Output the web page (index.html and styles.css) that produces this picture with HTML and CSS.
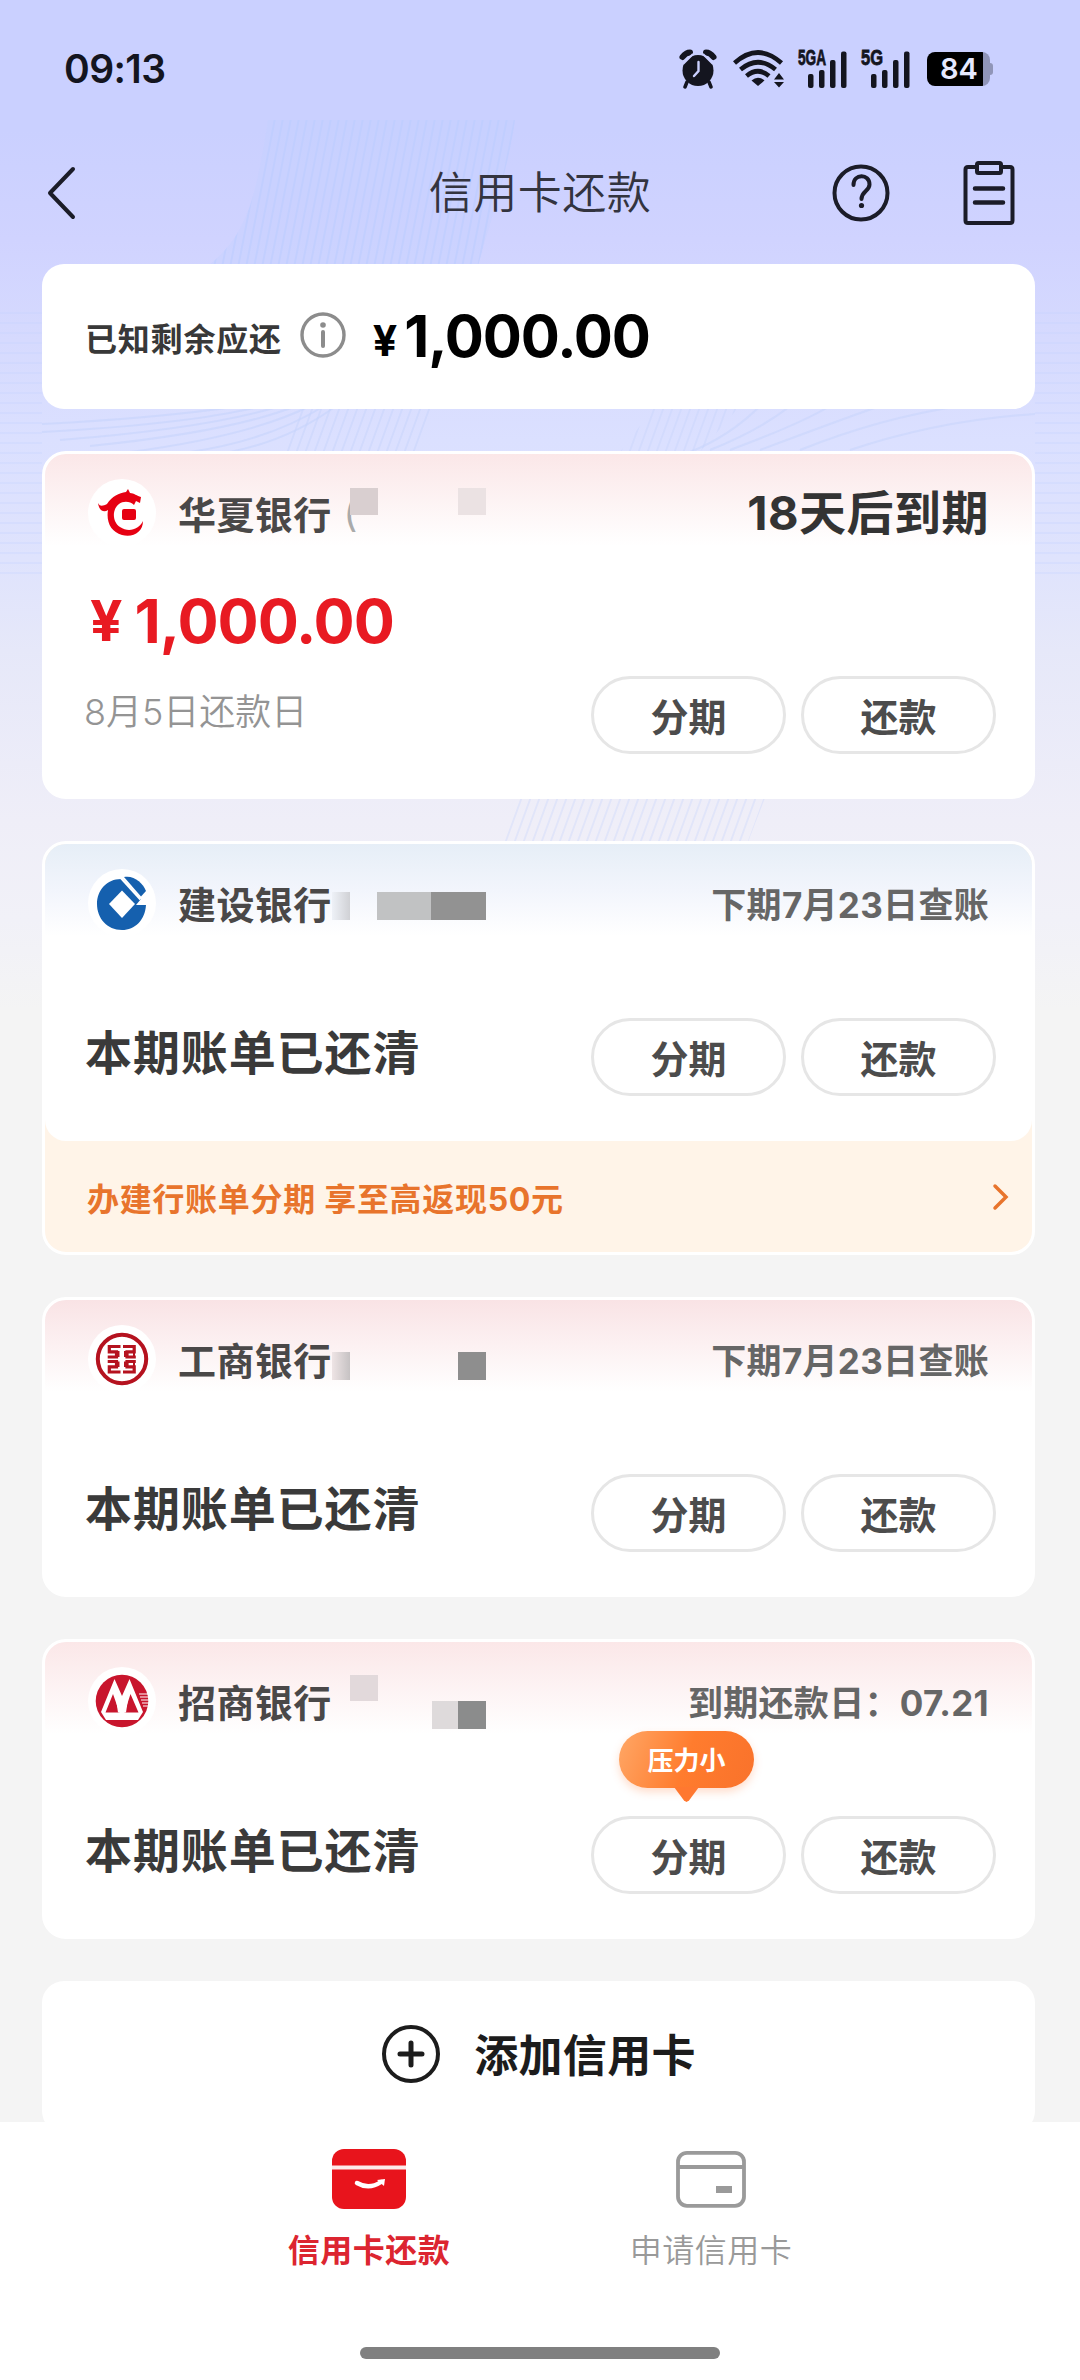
FILE: index.html
```html
<!DOCTYPE html>
<html lang="zh-CN">
<head>
<meta charset="utf-8">
<title>信用卡还款</title>
<link rel="stylesheet" href="styles.css">
</head>
<body>
<div class="screen">
  <svg class="waves" viewBox="0 0 1080 900" fill="none" aria-hidden="true">
    <defs>
      <pattern id="slant" width="8" height="900" patternUnits="userSpaceOnUse" patternTransform="skewX(-11)"><path d="M2 0V900" stroke="#b9cbff" stroke-width="2"/></pattern>
      <pattern id="slant2" width="9" height="900" patternUnits="userSpaceOnUse" patternTransform="skewX(-20)"><path d="M2 0V900" stroke="#c6d3fb" stroke-width="2"/></pattern>
      <pattern id="rows" width="200" height="10" patternUnits="userSpaceOnUse"><path d="M0 3H200" stroke="#c4d2ff" stroke-width="2"/></pattern>
    </defs>
    <path d="M268 120H515C508 170 492 215 478 266H208C246 236 256 200 268 120Z" fill="#c3d0ff" opacity=".35"/>
    <path d="M268 120H515C508 170 492 215 478 266H208C246 236 256 200 268 120Z" fill="url(#slant)" opacity=".5"/>
    <path d="M300 406H432L420 452H280Z" fill="url(#slant2)" opacity=".5"/>
    <path d="M310 406Q250 436 130 452M296 406Q230 432 90 446M280 406Q210 428 60 440M262 406Q190 424 42 432M240 406Q160 418 42 424M324 406Q270 440 190 452M336 406Q290 440 230 452" stroke="#c6d3fb" stroke-width="2" opacity=".6"/>
    <path d="M655 406H740L700 452H620Z" fill="url(#slant2)" opacity=".4"/>
    <path d="M760 406Q730 436 690 452M790 406Q760 430 710 450M830 406Q800 424 730 450M880 406Q840 420 760 450M960 406Q880 418 800 450M1035 414Q940 420 850 450" stroke="#c6d3fb" stroke-width="2" opacity=".5"/>
    <path d="M0 310H42V580H0ZM1035 310H1080V580H1035Z" fill="url(#rows)" opacity=".3"/>
    <path d="M520 798H765L748 842H504Z" fill="url(#slant2)" opacity=".35"/>
  </svg>

  <header class="statusbar">
    <span class="clock">09:13</span>
    <div class="indicators">
      <svg width="38" height="40" viewBox="0 0 38 40"><circle cx="19" cy="21.500" r="15.500" fill="#14151f"/><path d="M3.500 8Q7 3.500 11 3.500M34.500 8Q31 3.500 27 3.500" stroke="#14151f" stroke-width="6" stroke-linecap="round" fill="none"/><path d="M8 33L6 38M30 33L32 38" stroke="#14151f" stroke-width="3.500" stroke-linecap="round"/><path d="M19.500 13V22L15 27" stroke="#cbd0ff" stroke-width="2.400" fill="none" stroke-linecap="round"/><path d="M4 15L14 5M34 15L24 5" stroke="#cbd0ff" stroke-width="2"/></svg>
      <svg class="wifi" width="52" height="40" viewBox="0 0 52 40" fill="none" stroke="#14151f" stroke-width="4.600"><path d="M1.500 14Q25 -7 48.500 14"/><path d="M7.500 20.500Q25 6 42.500 20.500"/><path d="M13.500 27Q25 17.500 36 27"/><path d="M25 37L18.500 31.500Q25 26 31.500 31.500Z" fill="#14151f" stroke="none"/><path d="M41 30.500L46 24L51 30.500ZM41 33L46 38.500L51 33Z" fill="#14151f" stroke="none"/></svg>
      <div class="signal"><span class="net net-wide">5GA</span><svg width="49" height="38" viewBox="0 0 49 38" fill="#14151f"><rect x="10" y="24" width="5.500" height="14" rx="2"/><rect x="21" y="20" width="5.500" height="18" rx="2"/><rect x="32" y="10" width="5.500" height="28" rx="2"/><rect x="43" y="1.500" width="5.500" height="36.500" rx="2"/></svg></div>
      <div class="signal"><span class="net">5G</span><svg width="49" height="38" viewBox="0 0 49 38" fill="#14151f"><rect x="10" y="24" width="5.500" height="14" rx="2"/><rect x="21" y="20" width="5.500" height="18" rx="2"/><rect x="32" y="10" width="5.500" height="28" rx="2"/><rect x="43" y="1.500" width="5.500" height="36.500" rx="2"/></svg></div>
      <div class="battery"><span class="charge">84</span></div>
    </div>
  </header>

  <nav class="navbar">
    <svg class="back" width="32" height="56" viewBox="0 0 32 56" fill="none" stroke="#1b1c28" stroke-width="4" stroke-linecap="round" stroke-linejoin="round"><path d="M27 4L4 28L27 52"/></svg>
    <h1 class="title">信用卡还款</h1>
    <div class="actions">
      <svg width="58" height="58" viewBox="0 0 58 58" fill="none" stroke="#1b1c28" stroke-width="4"><circle cx="29" cy="29" r="26.500"/><path d="M21.500 21C21.500 9.500 37.500 9.500 37.500 20.500C37.500 27 29.500 27 29.500 35" stroke-linecap="round"/><circle cx="29.500" cy="41.500" r="2.600" fill="#1b1c28" stroke="none"/></svg>
      <svg width="52" height="66" viewBox="0 0 52 66" fill="none" stroke="#1b1c28" stroke-width="4" stroke-linejoin="round"><path d="M13 7H5Q2.500 7 2.500 9.500V60.500Q2.500 63 5 63H47Q49.500 63 49.500 60.500V9.500Q49.500 7 47 7H38"/><rect x="14" y="3" width="24" height="10" rx="1.500"/><path d="M12 28.500H40M12 42.500H40" stroke-linecap="round" stroke-width="4.500"/></svg>
    </div>
  </nav>

  <main class="content">
    <section class="summary">
      <span class="summary-label">已知剩余应还</span>
      <svg class="info" width="46" height="46" viewBox="0 0 46 46" fill="none" stroke="#8c8c8c" stroke-width="3.400"><circle cx="23" cy="23" r="21"/><path d="M23 20V34" stroke-width="4" stroke-linecap="round"/><circle cx="23" cy="13" r="2.800" fill="#8c8c8c" stroke="none"/></svg>
      <span class="summary-yen">¥</span><span class="summary-value">1,000.00</span>
    </section>

    <article class="card card-due tint-red">
      <div class="card-head">
        <div class="logo"><svg width="54" height="54" viewBox="0 0 54 54" fill="#e60012"><path d="M3 17C5 21 8 20 12 18C17 10 24 7 31 6L33 3L35 7C39 7 42 10 46 11L45 17L41 15L39 19C35 15 28 15 24 18C17 23 17 36 25 41C34 47 44 43 48 35C48 46 38 52 27 49C16 46 11 36 13 24C9 27 4 25 3 17Z"/><rect x="27" y="23" width="14" height="11" rx="2"/></svg></div>
        <span class="bank">华夏银行</span><span class="paren">(</span>
        <span class="deadline">18天后到期</span>
      </div>
      <div class="mask mask-a"><i></i><i></i></div>
      <div class="card-body">
        <div class="bill">
          <div class="amount"><span class="yen">¥</span><span>1,000.00</span></div>
          <div class="due-date">8月5日还款日</div>
        </div>
        <div class="buttons"><button class="pill">分期</button><button class="pill">还款</button></div>
      </div>
    </article>

    <article class="card tint-blue has-promo">
      <div class="card-main">
        <div class="card-head">
          <div class="logo"><svg width="54" height="58" viewBox="0 0 54 58"><path d="M26 5C12 5 2 16 2 30S12 56 27 56C40 56 50 46 51 31H41L46 25L28 5Z" fill="#1560ae"/><path d="M14 30L27 16.500L40 30L27 44Z" fill="#fff"/><path d="M29 3C39 1 48 9 51 17L46 22.500Z" fill="#1560ae"/><path d="M26 4L45.500 25.500" stroke="#fff" stroke-width="2.400"/></svg></div>
          <span class="bank">建设银行</span>
          <span class="next">下期7月23日查账</span>
        </div>
        <div class="mask mask-b"><i></i><i></i><i></i></div>
        <div class="card-body">
          <div class="cleared">本期账单已还清</div>
          <div class="buttons"><button class="pill">分期</button><button class="pill">还款</button></div>
        </div>
      </div>
      <div class="promo"><span>办建行账单分期 享至高返现50元</span><svg width="18" height="28" viewBox="0 0 18 28" fill="none" stroke="#e8742c" stroke-width="3.500" stroke-linecap="round"><path d="M3 3L14 14L3 25"/></svg></div>
    </article>

    <article class="card tint-rose">
      <div class="card-head">
        <div class="logo"><svg width="54" height="54" viewBox="0 0 54 54" fill="none" stroke="#b5121f"><circle cx="27" cy="27" r="24.200" stroke-width="4"/><g stroke-width="3.200"><path d="M25.500 14.500H14.300V19.800H21.500V25H12.700M12.700 29.500H21.500V34.800H14.300V40H25.500"/><path d="M28.500 14.500H39.700V19.800H32.500V25H41.300M41.300 29.500H32.500V34.800H39.700V40H28.500" transform="translate(-.5 0)"/><path d="M23.500 19V25M30 19V25M23.500 29.500V35M30 29.500V35M39 20V25M39 29.500V35" stroke-width="2"/></g></svg></div>
        <span class="bank">工商银行</span>
        <span class="next">下期7月23日查账</span>
      </div>
      <div class="mask mask-c"><i></i><i></i></div>
      <div class="card-body">
        <div class="cleared">本期账单已还清</div>
        <div class="buttons"><button class="pill">分期</button><button class="pill">还款</button></div>
      </div>
    </article>

    <article class="card tint-red">
      <div class="card-head">
        <div class="logo"><svg width="54" height="54" viewBox="0 0 54 54"><circle cx="27" cy="27" r="26.300" fill="#c8152d"/><path d="M19.500 5L27 22L34.500 5L48 38L43 46H11L6 38Z" fill="#fff"/><path d="M18 20L10.500 38.500H24.500ZM35.500 20L29.500 38.500H43.500Z" fill="#c8152d"/><path d="M20 19L27 33L34 19L31 38.500H29L27 34L25 38.500H23Z" fill="#fff"/><path d="M44 20H53M45 23H53.500M46 26H54M47 29H54M48 32H53" stroke="#fff" stroke-width="1.200"/></svg></div>
        <span class="bank">招商银行</span>
        <span class="next">到期还款日：07.21</span>
      </div>
      <div class="mask mask-d"><i></i><i></i><i></i></div>
      <div class="card-body">
        <div class="cleared">本期账单已还清</div>
        <div class="buttons"><div class="tip">压力小</div><button class="pill">分期</button><button class="pill">还款</button></div>
      </div>
    </article>

    <section class="add">
      <svg width="60" height="60" viewBox="0 0 60 60" fill="none" stroke="#1c1c1c"><circle cx="30" cy="30" r="27" stroke-width="4"/><path d="M30 19V41M19 30H41" stroke-width="5" stroke-linecap="round"/></svg>
      <span>添加信用卡</span>
    </section>
  </main>

  <footer class="tabbar">
    <div class="tabs">
      <div class="tab active">
        <svg width="76" height="62" viewBox="0 0 76 62"><rect x="1" y="1" width="74" height="60" rx="12" fill="#e8141c"/><path d="M1 19.500H75" stroke="#fdeaea" stroke-width="4"/><path d="M26 35Q38 42 50 34" fill="none" stroke="#fff" stroke-width="4.500" stroke-linecap="round"/><path d="M46 32L54 31L53 38Z" fill="#fff"/></svg>
        <span>信用卡还款</span>
      </div>
      <div class="tab">
        <svg width="76" height="62" viewBox="0 0 76 62" fill="none" stroke="#9a9a9a" stroke-width="3.800"><rect x="5" y="4.800" width="66" height="53" rx="9"/><path d="M5 19H71"/><rect x="43" y="38" width="16" height="7" fill="#9a9a9a" stroke="none"/></svg>
        <span>申请信用卡</span>
      </div>
    </div>
    <div class="home-bar"></div>
  </footer>
</div>
</body>
</html>
```

FILE: styles.css
```css
* { box-sizing: border-box; }
body { margin: 0; font-family: Inter, "Noto Sans CJK SC", sans-serif; }
.screen { position: relative; width: 1080px; height: 2380px; overflow: hidden; display: flex; flex-direction: column; background: linear-gradient(180deg, #cad0ff 0, #cad0ff 130px, #d0d3ff 240px, #d6dafe 340px, #dbe0ff 440px, #dfe3fd 560px, #e6e8f9 650px, #efeef8 820px, #f1f1f8 920px, #f4f4f4 1010px); }
.waves { position: absolute; left: 0; top: 0; width: 1080px; height: 900px; }
.statusbar, .navbar, .content, .tabbar { position: relative; }

.statusbar { height: 136px; flex: none; display: flex; justify-content: space-between; align-items: center; padding: 2px 90px 0 64px; color: #14151f; }
.clock { font-size: 39px; font-weight: 600; line-height: 50px; letter-spacing: -0.6px; }
.indicators { display: flex; align-items: center; }
.wifi { margin-left: 16px; }
.signal { position: relative; display: flex; margin-left: 13px; }
.signal + .signal { margin-left: 14px; }
.net { position: absolute; left: 0; top: -2px; font: 700 22px/20px "Liberation Sans", sans-serif; transform: scaleX(.75); transform-origin: 0 0; -webkit-text-stroke: .8px #14151f; }
.net-wide { transform: scaleX(.62); }
.battery { position: relative; width: 63px; height: 34px; margin-left: 17px; border-radius: 8px; background: linear-gradient(90deg, #000 56px, #9095b8 56px); display: flex; align-items: center; padding-left: 13px; }
.battery::after { content: ""; position: absolute; right: -3px; top: 11px; width: 4px; height: 12px; border-radius: 0 3px 3px 0; background: #9095b8; }
.charge { color: #e6e9ff; font-size: 29px; font-weight: 600; line-height: 34px; }

.navbar { height: 128px; flex: none; display: grid; grid-template-columns: 1fr auto 1fr; align-items: center; padding: 0 65px 14px 46px; }
.title { margin: 0 0 0 19px; font-size: 44px; font-weight: 350; letter-spacing: .5px; line-height: 60px; color: #33343f; }
.actions { display: flex; justify-content: flex-end; align-items: center; gap: 73px; }

.content { flex: none; height: 1858px; overflow: hidden; padding: 0 45px 0 42px; display: flex; flex-direction: column; gap: 42px; }
.summary { flex: none; height: 145px; border-radius: 22px; background: #fff; display: flex; align-items: center; padding-left: 43px; }
.summary-label { font-size: 32px; font-weight: 700; letter-spacing: .8px; color: #383838; }
.info { margin-left: 18px; margin-top: -3px; }
.summary-yen { margin-left: 27px; font-size: 43px; font-weight: 700; color: #000; padding-top: 6px; }
.summary-value { margin-left: 7px; margin-top: -2px; font-size: 58px; font-weight: 700; letter-spacing: -1.1px; color: #000; }

.card { position: relative; flex: none; height: 300px; border: 3px solid #fff; border-radius: 24px; background: #fff; }
.card-due { height: 348px; }
.has-promo { height: 414px; background: #fff4e8; }
.card-main { height: 297px; border-radius: 21px; background: #fff; }
.tint-red { background: linear-gradient(180deg, #fbe7e8, #fff 92px); }
.tint-rose { background: linear-gradient(180deg, #f9e3e5, #fff 92px); }
.tint-blue .card-main { background: linear-gradient(180deg, #e6eef7, #f2f5fc 46px, #fff 92px); }
.card-head { height: 117px; display: flex; align-items: center; padding: 0 43px 0 43px; }
.logo { width: 68px; height: 68px; flex: none; border-radius: 50%; background: #fff; display: flex; align-items: center; justify-content: center; }
.bank { margin-left: 22px; font-size: 38px; font-weight: 700; letter-spacing: .4px; color: #4a4848; }
.paren { font-size: 38px; color: #aaa; margin-left: 12px; }
.next { margin-left: auto; font-size: 35px; font-weight: 700; letter-spacing: .3px; color: #666; }
.deadline { margin-left: auto; margin-top: -6px; font-size: 47px; font-weight: 700; letter-spacing: .5px; color: #333; }
.card-body { display: flex; align-items: flex-end; justify-content: space-between; padding: 0 36px 0 40px; height: 135px; }
.card-due .card-body { height: 183px; }
.bill { align-self: flex-start; }
.amount { display: flex; align-items: center; gap: 13px; margin: 12px 0 0 5px; font-size: 61px; line-height: 76px; font-weight: 700; letter-spacing: -1px; color: #e81a22; }
.yen { font-size: 57px; }
.due-date { margin-top: 30px; margin-left: -1px; font-size: 36px; line-height: 46px; font-weight: 350; color: #949494; }
.cleared { font-size: 47px; line-height: 60px; font-weight: 700; letter-spacing: .9px; color: #3a3a3a; padding-bottom: 7px; height: 73px; box-sizing: content-box; display: flex; align-items: center; }
.buttons { position: relative; display: flex; gap: 15px; }
.pill { width: 195px; height: 78px; padding: 3px 0 0; border: 3px solid #e6e6e6; border-radius: 39px; background: #fff; color: #4c4c4c; font: 700 38px/50px Inter, "Noto Sans CJK SC", sans-serif; }
.tip { position: absolute; left: 28px; top: -85px; width: 135px; height: 57px; border-radius: 29px; background: linear-gradient(110deg, #ffa766, #ff7c2e 50%, #f9722b); box-shadow: 0 4px 8px rgba(255, 120, 50, .25); color: #fff; font-size: 26px; font-weight: 700; line-height: 60px; text-align: center; }
.tip::after { content: ""; position: absolute; left: 55px; top: 56px; width: 25px; height: 15px; background: #ff7830; clip-path: polygon(0 0, 100% 0, 60% 90%, 50% 100%, 40% 90%); }

.promo { height: 111px; display: flex; align-items: center; justify-content: space-between; padding: 1px 22px 0 42px; font-size: 32px; font-weight: 700; letter-spacing: .7px; color: #e8742c; }

/* pixel mask over the hidden card digits */
.mask { position: absolute; }
.mask i { position: absolute; display: block; height: 28px; width: 28px; }
.mask-a { left: 305px; top: 34px; }
.mask-a i:nth-child(1) { background: #d9cfd0; height: 27px; }
.mask-a i:nth-child(2) { left: 108px; background: #ebe2e3; height: 27px; }
.mask-b { left: 287px; top: 48px; }
.mask-b i:nth-child(1) { width: 18px; background: linear-gradient(90deg, #eef1f7, #d0d1d5); }
.mask-b i:nth-child(2) { left: 45px; width: 55px; background: #c1c2c3; }
.mask-b i:nth-child(3) { left: 99px; width: 55px; background: #929292; }
.mask-c { left: 287px; top: 52px; }
.mask-c i:nth-child(1) { width: 18px; background: linear-gradient(90deg, #eee4e5, #c6c2c3); }
.mask-c i:nth-child(2) { left: 126px; background: #8e8e8e; }
.mask-d { left: 305px; top: 33px; }
.mask-d i:nth-child(1) { background: #e2d9db; height: 26px; }
.mask-d i:nth-child(2) { left: 82px; top: 26px; background: #dedadb; }
.mask-d i:nth-child(3) { left: 108px; top: 26px; background: #8b8c8c; }

.add { flex: none; height: 152px; border-radius: 22px; background: #fff; display: flex; align-items: center; justify-content: center; gap: 33px; padding-bottom: 6px; font-size: 44px; font-weight: 700; letter-spacing: .3px; color: #1c1c1c; }
.add span { margin-top: -3px; }
.tabbar { flex: none; height: 258px; background: #fff; }
.tabs { display: flex; justify-content: center; padding-top: 26px; }
.tab { width: 342px; display: flex; flex-direction: column; align-items: center; font-size: 32px; font-weight: 350; letter-spacing: .5px; color: #999; }
.tab span { margin-top: 18px; line-height: 46px; }
.active { color: #dc2530; font-weight: 700; }
.home-bar { position: absolute; left: 360px; bottom: 21px; width: 360px; height: 12px; border-radius: 6px; background: #808080; }
```
